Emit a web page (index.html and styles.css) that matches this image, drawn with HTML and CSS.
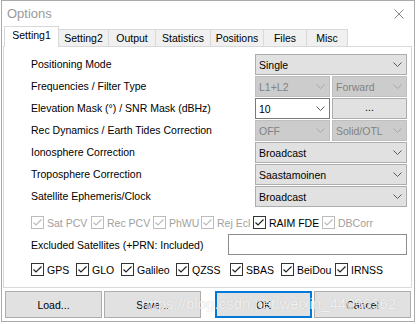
FILE: index.html
```html
<!DOCTYPE html>
<html>
<head>
<meta charset="utf-8">
<title>Options</title>
<link rel="stylesheet" href="styles.css">
</head>
<body>
<div class="window">
  <div class="titlebar">
    <span class="title">Options</span>
    <svg class="close" width="10" height="10" viewBox="0 0 10 10"><path d="M0.5 0.5L9.5 9.5M9.5 0.5L0.5 9.5" stroke="#8a8a8a" stroke-width="1" fill="none"/></svg>
  </div>
  <div class="tabs">
    <div class="tab active t1">Setting1</div>
    <div class="tab t2">Setting2</div>
    <div class="tab t3">Output</div>
    <div class="tab t4">Statistics</div>
    <div class="tab t5">Positions</div>
    <div class="tab t6">Files</div>
    <div class="tab t7">Misc</div>
  </div>
  <div class="panel">
    <div class="form">
      <div class="label">Positioning Mode</div>
      <div class="select"><span>Single</span><svg class="chev" width="9" height="5" viewBox="0 0 9 5"><polyline points="0.5,0.5 4.5,4.5 8.5,0.5"/></svg></div>

      <div class="label">Frequencies / Filter Type</div>
      <div class="pair">
        <div class="select disabled"><span>L1+L2</span><svg class="chev" width="9" height="5" viewBox="0 0 9 5"><polyline points="0.5,0.5 4.5,4.5 8.5,0.5"/></svg></div>
        <div class="select disabled"><span>Forward</span><svg class="chev" width="9" height="5" viewBox="0 0 9 5"><polyline points="0.5,0.5 4.5,4.5 8.5,0.5"/></svg></div>
      </div>

      <div class="label">Elevation Mask (°) / SNR Mask (dBHz)</div>
      <div class="pair">
        <div class="select combo"><span>10</span><svg class="chev" width="9" height="5" viewBox="0 0 9 5"><polyline points="0.5,0.5 4.5,4.5 8.5,0.5"/></svg></div>
        <div class="select dots">...</div>
      </div>

      <div class="label">Rec Dynamics / Earth Tides Correction</div>
      <div class="pair">
        <div class="select disabled"><span>OFF</span><svg class="chev" width="9" height="5" viewBox="0 0 9 5"><polyline points="0.5,0.5 4.5,4.5 8.5,0.5"/></svg></div>
        <div class="select disabled"><span>Solid/OTL</span><svg class="chev" width="9" height="5" viewBox="0 0 9 5"><polyline points="0.5,0.5 4.5,4.5 8.5,0.5"/></svg></div>
      </div>

      <div class="label">Ionosphere Correction</div>
      <div class="select"><span>Broadcast</span><svg class="chev" width="9" height="5" viewBox="0 0 9 5"><polyline points="0.5,0.5 4.5,4.5 8.5,0.5"/></svg></div>

      <div class="label">Troposphere Correction</div>
      <div class="select"><span>Saastamoinen</span><svg class="chev" width="9" height="5" viewBox="0 0 9 5"><polyline points="0.5,0.5 4.5,4.5 8.5,0.5"/></svg></div>

      <div class="label">Satellite Ephemeris/Clock</div>
      <div class="select"><span>Broadcast</span><svg class="chev" width="9" height="5" viewBox="0 0 9 5"><polyline points="0.5,0.5 4.5,4.5 8.5,0.5"/></svg></div>
    </div>

    <div class="checks opts">
      <label class="check disabled"><span class="box"><svg width="11" height="11" viewBox="0 0 11 11"><polyline points="1.5,5.5 4,8 9.5,2.5"/></svg></span>Sat PCV</label>
      <label class="check disabled"><span class="box"><svg width="11" height="11" viewBox="0 0 11 11"><polyline points="1.5,5.5 4,8 9.5,2.5"/></svg></span>Rec PCV</label>
      <label class="check disabled"><span class="box"><svg width="11" height="11" viewBox="0 0 11 11"><polyline points="1.5,5.5 4,8 9.5,2.5"/></svg></span>PhWU</label>
      <label class="check disabled"><span class="box"><svg width="11" height="11" viewBox="0 0 11 11"><polyline points="1.5,5.5 4,8 9.5,2.5"/></svg></span>Rej Ecl</label>
      <label class="check"><span class="box"><svg width="11" height="11" viewBox="0 0 11 11"><polyline points="1.5,5.5 4,8 9.5,2.5"/></svg></span>RAIM FDE</label>
      <label class="check disabled"><span class="box"><svg width="11" height="11" viewBox="0 0 11 11"><polyline points="1.5,5.5 4,8 9.5,2.5"/></svg></span>DBCorr</label>
    </div>

    <div class="excl">
      <span>Excluded Satellites (+PRN: Included)</span>
      <div class="input"></div>
    </div>

    <div class="checks sys">
      <label class="check"><span class="box"><svg width="11" height="11" viewBox="0 0 11 11"><polyline points="1.5,5.5 4,8 9.5,2.5"/></svg></span>GPS</label>
      <label class="check"><span class="box"><svg width="11" height="11" viewBox="0 0 11 11"><polyline points="1.5,5.5 4,8 9.5,2.5"/></svg></span>GLO</label>
      <label class="check"><span class="box"><svg width="11" height="11" viewBox="0 0 11 11"><polyline points="1.5,5.5 4,8 9.5,2.5"/></svg></span>Galileo</label>
      <label class="check"><span class="box"><svg width="11" height="11" viewBox="0 0 11 11"><polyline points="1.5,5.5 4,8 9.5,2.5"/></svg></span>QZSS</label>
      <label class="check"><span class="box"><svg width="11" height="11" viewBox="0 0 11 11"><polyline points="1.5,5.5 4,8 9.5,2.5"/></svg></span>SBAS</label>
      <label class="check"><span class="box"><svg width="11" height="11" viewBox="0 0 11 11"><polyline points="1.5,5.5 4,8 9.5,2.5"/></svg></span>BeiDou</label>
      <label class="check"><span class="box"><svg width="11" height="11" viewBox="0 0 11 11"><polyline points="1.5,5.5 4,8 9.5,2.5"/></svg></span>IRNSS</label>
    </div>
  </div>
  <div class="buttons">
    <div class="group">
      <div class="btn">Load...</div>
      <div class="btn">Save...</div>
    </div>
    <div class="group">
      <div class="btn default">OK</div>
      <div class="btn">Cancel</div>
    </div>
  </div>
</div>
<div class="watermark">https://blog.csdn.net/weixin_44096362</div>
</body>
</html>
```

FILE: styles.css
```css
body {
  margin: 0;
  background: #fff;
  font-family: "Liberation Sans", Arial, sans-serif;
  font-size: 10.5px;
  color: #000;
}

.window {
  margin-left: 1px;
  width: 414px;
  height: 322px;
  box-sizing: border-box;
  border: 1px solid #aaa;
  background: #fff;
  display: flex;
  flex-direction: column;
}

.titlebar {
  height: 25px;
  flex: none;
  display: flex;
  align-items: center;
  justify-content: space-between;
  padding: 0 10px 0 5px;
}

.title {
  font-size: 13px;
  color: #999;
}

.tabs {
  height: 20px;
  flex: none;
  display: flex;
  align-items: flex-end;
  padding-left: 2px;
  font-size: 10.5px;
}

.tab {
  height: 17px;
  box-sizing: border-box;
  border: 1px solid #d9d9d9;
  border-bottom: none;
  background: #f0f0f0;
  margin-left: -1px;
  text-align: center;
  padding-top: 1px;
  line-height: 15px;
}

.tab.active {
  height: 21px;
  margin-left: 0;
  margin-bottom: -1px;
  background: #fff;
  position: relative;
  z-index: 1;
  padding-top: 0;
  line-height: 17px;
}

.t1 { width: 55px; }
.t2 { width: 51px; }
.t3 { width: 48px; }
.t4 { width: 56px; }
.t5 { width: 54px; }
.t6 { width: 44px; }
.t7 { width: 42px; }

.panel {
  flex: none;
  margin: 0 2px 0 1px;
  height: 242px;
  box-sizing: border-box;
  border: 1px solid #d9d9d9;
  background: #fff;
  padding: 7px 4px 0 27px;
}

.form {
  display: grid;
  grid-template-columns: 1fr 152px;
  grid-auto-rows: 21px;
  row-gap: 1px;
  align-items: center;
}

.label {
  white-space: nowrap;
  padding-bottom: 1px;
}

.pair {
  display: grid;
  grid-template-columns: 75px 75px;
  column-gap: 2px;
  height: 21px;
}

.select {
  height: 21px;
  box-sizing: border-box;
  border: 1px solid #adadad;
  background: #e1e1e1;
  display: flex;
  align-items: center;
  justify-content: space-between;
  padding: 0 4px 0 3px;
  color: #000;
}

.chev polyline {
  fill: none;
  stroke: #5a5a5a;
  stroke-width: 1;
}

.select.disabled {
  background: #cccccc;
  border-color: #bfbfbf;
  color: #838383;
}

.select.disabled .chev polyline {
  stroke: #a8a8a8;
}

.select.combo {
  background: #fff;
  border-color: #7a7a7a;
}

.select.dots {
  justify-content: center;
  padding: 0 0 4px;
}

.checks {
  display: grid;
  height: 13px;
  align-items: center;
}

.checks.opts {
  margin-top: 9px;
  grid-template-columns: 60px 62px 48px 52px 69px auto;
}

.checks.sys {
  margin-top: 8px;
  grid-template-columns: 45px 45px 55px 54px 51px 54px auto;
}

.check {
  display: flex;
  align-items: center;
  gap: 3px;
  white-space: nowrap;
}

.box {
  width: 13px;
  height: 13px;
  box-sizing: border-box;
  border: 1px solid #333;
  background: #fff;
  flex: none;
  display: flex;
}

.box polyline {
  fill: none;
  stroke: #222;
  stroke-width: 1.2;
}

.check.disabled {
  color: #a0a0a0;
}

.check.disabled .box {
  border-color: #bcbcbc;
}

.check.disabled .box polyline {
  stroke: #bcbcbc;
}

.excl {
  margin-top: 5px;
  height: 21px;
  display: flex;
  align-items: center;
  justify-content: space-between;
}

.input {
  width: 179px;
  height: 21px;
  box-sizing: border-box;
  border: 1px solid #8c8c8c;
  background: #fff;
}

.buttons {
  flex: none;
  display: flex;
  justify-content: space-between;
  padding: 3px 3px 0;
}

.group {
  display: flex;
  gap: 2px;
}

.btn {
  width: 97px;
  height: 27px;
  box-sizing: border-box;
  border: 1px solid #adadad;
  background: #e1e1e1;
  display: flex;
  align-items: center;
  justify-content: center;
}

.btn.default {
  border: 2px solid #0078d7;
}

.watermark {
  position: absolute;
  left: 141px;
  top: 295px;
  font-family: "Liberation Sans", Arial, sans-serif;
  font-size: 15px;
  line-height: 17px;
  color: rgba(255, 255, 255, 0.78);
  text-shadow: 0 0 1px rgba(0, 0, 0, 0.18);
  white-space: nowrap;
  pointer-events: none;
}
```
